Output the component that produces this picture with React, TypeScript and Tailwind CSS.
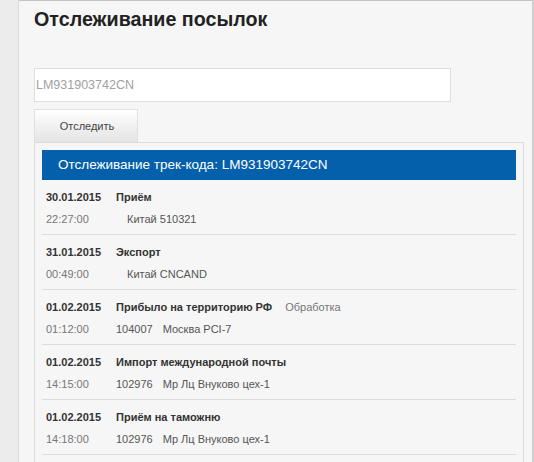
const events = [
  { date: '30.01.2015', time: '22:27:00', title: 'Приём', note: '', zip: '', place: 'Китай 510321' },
  { date: '31.01.2015', time: '00:49:00', title: 'Экспорт', note: '', zip: '', place: 'Китай CNCAND' },
  { date: '01.02.2015', time: '01:12:00', title: 'Прибыло на территорию РФ', note: 'Обработка', zip: '104007', place: 'Москва PCI-7' },
  { date: '01.02.2015', time: '14:15:00', title: 'Импорт международной почты', note: '', zip: '102976', place: 'Мр Лц Внуково цех-1' },
  { date: '01.02.2015', time: '14:18:00', title: 'Приём на таможню', note: '', zip: '102976', place: 'Мр Лц Внуково цех-1' },
]

const App = () => {
  const code = 'LM931903742CN'

  return (
    <div className="flex w-[534px] h-[462px] overflow-hidden bg-[#f6f6f6] font-['Liberation_Sans',Arial,sans-serif]">
      {/* Sidebar strip */}
      <div className="w-[19px] shrink-0 bg-[#ececec] border-r border-[#dcdcdc]" />

      {/* Main panel */}
      <div className="flex-1 bg-[#f6f6f6] border-t border-[#c4c4c4] border-r-2 border-r-[#cfcfcf] pl-[15px] pr-[8px]">
        <h1 className="mt-[6px] text-[19.7px] leading-6 font-bold text-[#222]">
          Отслеживание посылок
        </h1>

        <div className="mt-[37px] w-[417px] h-[34px] bg-white border border-[#dedede] flex items-center pl-[1px]">
          <span className="text-[12.5px] text-[#a0a0a0]">{code}</span>
        </div>

        <button className="mt-[7px] w-[104px] h-[33px] flex items-center justify-center pl-[2px] bg-gradient-to-b from-white to-[#e4e4e4] border-x border-t border-[#e0e0e0] text-[11px] text-[#444]">
          Отследить
        </button>

        {/* Results */}
        <div className="border border-[#dcdcdc] bg-[#f6f6f6] px-[7px] pt-[7px] h-[330px]">
          <div className="h-[30px] bg-[#0560ac] flex items-center pl-[16px] text-[13.5px] text-white">
            Отслеживание трек-кода: {code}
          </div>

          {events.map((e, i) => (
            <div key={i} className="h-[55px] pt-[6px] pl-[4px] border-b border-[#dcdcdc] text-[11px] leading-[22px]">
              <div className="flex">
                <span className="w-[70px] font-bold text-[#333]">{e.date}</span>
                <span className="font-bold text-[#333]">{e.title}</span>
                {e.note && <span className="ml-[13px] text-[#777]">{e.note}</span>}
              </div>
              <div className="flex">
                <span className="w-[70px] text-[#777]">{e.time}</span>
                {e.zip ? (
                  <>
                    <span className="text-[#555]">{e.zip}</span>
                    <span className="ml-[10px] text-[#555]">{e.place}</span>
                  </>
                ) : (
                  <span className="pl-[11px] text-[#555]">{e.place}</span>
                )}
              </div>
            </div>
          ))}
        </div>
      </div>
    </div>
  )
}

export default App
